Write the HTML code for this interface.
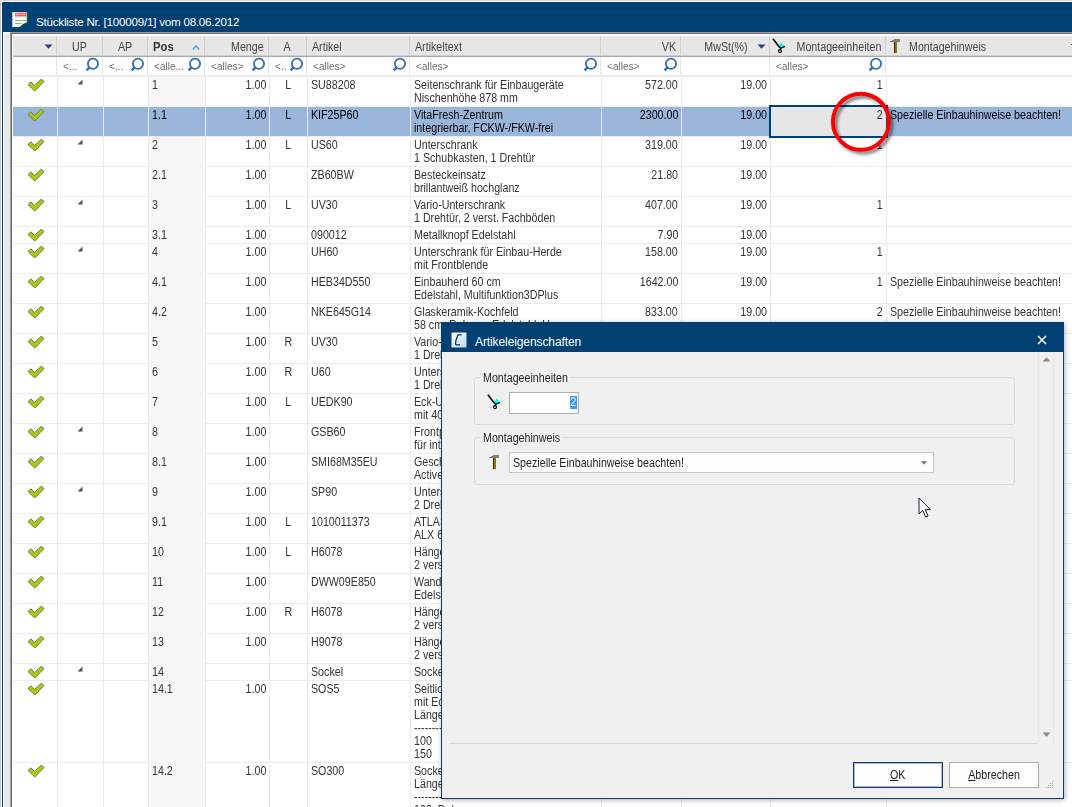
<!DOCTYPE html>
<html lang="de"><head><meta charset="utf-8"><title>Stückliste</title>
<style>
html,body{margin:0;padding:0}
body{width:1072px;height:807px;overflow:hidden;position:relative;background:#fff;font-family:"Liberation Sans",sans-serif;font-size:12px;line-height:13px;color:#333}
div,span{box-sizing:border-box}
.abs{position:absolute}
.t{display:inline-block;transform:scaleX(.89);white-space:pre}
.tl{transform-origin:0 0}
.tr{transform-origin:100% 0}
.tc{transform-origin:50% 0}
#title{left:3px;top:2px;width:1069px;height:30px;background:#004072}
#title .tt{position:absolute;left:33px;top:12.5px;color:#fff;font-size:11.6px;line-height:14px;letter-spacing:-0.22px;white-space:nowrap}
.row{position:absolute;left:13px;width:1059px;border-bottom:1px solid #ececec}
.c{position:absolute;top:0;bottom:-1px;border-left:1px solid #ebebeb;padding:2px 3px 0 3px;white-space:pre;overflow:hidden}
.r{text-align:right}
.ce{text-align:center;padding-left:0;padding-right:0}
.sel{background:#9ab5da;color:#000}
.sel .c{border-left-color:#e4eaf3;bottom:0}
.pos{background:#f7f7f7}
.sel .pos{background:transparent}
.ck{position:absolute;left:14px;top:1px}
.tri{position:absolute;left:19px;top:2px}
.hd{position:absolute;top:36px;height:20px;border-left:1px solid #d0d0d0;color:#444;padding:5px 4px 0 5px;white-space:nowrap;overflow:hidden}
.fl{position:absolute;top:57px;height:18px;border-left:1px solid #e6e6e6;color:#6e6e6e;font-size:11px;padding:2.5px 0 0 5.5px;white-space:nowrap;overflow:hidden}
.mag{position:absolute;right:2px;top:0}
</style></head><body>

<div class="abs" style="left:0;top:0;width:1px;height:807px;background:#c9c9c9"></div>
<div class="abs" style="left:0;top:0;width:1072px;height:1px;background:#d6d6d6"></div>
<div class="abs" style="left:2px;top:2px;width:1px;height:805px;background:#004072"></div>
<div class="abs" style="left:4px;top:33px;width:6px;height:774px;background:#e8e8e8"></div>
<div class="abs" style="left:10px;top:32px;width:1px;height:775px;background:#a0a0a0"></div>
<div class="abs" style="left:10px;top:32px;width:1062px;height:1px;background:#a0a0a0"></div>
<div class="abs" style="left:11px;top:33px;width:1px;height:774px;background:#696969"></div>
<div class="abs" style="left:11px;top:33px;width:1061px;height:1px;background:#696969"></div>
<div id="title" class="abs"><svg class="abs" style="left:8px;top:9px" width="18" height="18" viewBox="0 0 18 18"><path d="M1.2 1.2 H16.4 V10.5 C16.4 12.6 14 12.4 12 13.3 C10.6 15.6 8.6 16.8 6 16.8 H1.2 Z" fill="#fff"/><path d="M16.2 1 V10.5 C16.2 12.6 14 12.4 12 13.3 C10.6 15.6 8.6 16.6 6 16.6 H1" fill="none" stroke="#0a4d0a" stroke-width="0.9"/><path d="M1.4 1 V16.6" stroke="#9a9a9a" stroke-width="0.6"/><rect x="4" y="2.2" width="11.4" height="2.8" fill="#ff4a4a"/><path d="M5 3.6 H14.4" stroke="#fff" stroke-width="1" stroke-dasharray="1.6 0.8" opacity="0.8"/><path d="M4 5.7 H15.4" stroke="#7dbb7d" stroke-width="0.7"/><path d="M4 9.6 H15.4 M4 12.6 H10.6" stroke="#6db36d" stroke-width="1"/></svg><span class="tt">Stückliste Nr. [100009/1] vom 08.06.2012</span></div>
<div class="abs" style="left:13px;top:36px;width:1059px;height:19px;background:#e7e7e7"></div>
<div class="abs" style="left:13px;top:55px;width:1059px;height:1px;background:#cfcfcf"></div>
<div class="abs" style="left:13px;top:56px;width:1059px;height:1px;background:#a9a9a9"></div>
<div class="abs" style="left:13px;top:75px;width:1059px;height:2px;background:#ebebeb"></div>
<div class="hd" style="left:13px;width:43px;border-left:none;"><svg class="abs" style="left:31px;top:8px" width="9" height="5" viewBox="0 0 9 5"><path d="M0.5 0.5 H8.5 L4.5 4.8 Z" fill="#2b3f8c"/></svg></div>
<div class="hd" style="left:56px;width:46px;text-align:center;padding-left:0;padding-right:0;"><span class="t tc">UP</span></div>
<div class="hd" style="left:102px;width:45px;text-align:center;padding-left:0;padding-right:0;"><span class="t tc">AP</span></div>
<div class="hd" style="left:147px;width:57px;"><span class="t tl" style="transform:scaleX(.94)"><b style="color:#333">Pos</b></span><svg class="abs" style="left:44px;top:9px" width="8" height="5" viewBox="0 0 8 5"><path d="M0.8 4.4 L4 1 L7.2 4.4" fill="none" stroke="#5b9bd5" stroke-width="1.5"/></svg></div>
<div class="hd" style="left:204px;width:64px;text-align:right;"><span class="t tr">Menge</span></div>
<div class="hd" style="left:268px;width:38px;text-align:center;padding-left:0;padding-right:0;"><span class="t tc">A</span></div>
<div class="hd" style="left:306px;width:103px;"><span class="t tl">Artikel</span></div>
<div class="hd" style="left:409px;width:191px;"><span class="t tl">Artikeltext</span></div>
<div class="hd" style="left:600px;width:80px;text-align:right;"><span class="t tr">VK</span></div>
<div class="hd" style="left:680px;width:89px;text-align:right;padding-right:21px;"><span class="t tr">MwSt(%)</span><svg class="abs" style="left:76px;top:8px" width="9" height="5" viewBox="0 0 9 5"><path d="M0.5 0.5 H8.5 L4.5 4.8 Z" fill="#2b3f8c"/></svg></div>
<div class="hd" style="left:769px;width:116px;text-align:right;"><span class="t tr">Montageeinheiten</span><span class="abs" style="left:2px;top:2px"><svg width="16" height="16" viewBox="0 0 16 16"><path d="M1.3 1.3 L6.9 8.4" stroke="#000" stroke-width="1.6" stroke-linecap="round" fill="none"/><path d="M9.5 4.6 L12.5 7.9 L9.4 10 L6.8 7.9 Z" fill="#00ffff"/><path d="M6.3 8 L8.7 10.3 L13 8.3" stroke="#000" stroke-width="1.3" fill="none"/><path d="M8.9 10.4 L7.9 11.8" stroke="#000" stroke-width="1.3"/><circle cx="8" cy="13.1" r="1.5" fill="none" stroke="#000" stroke-width="1.1"/></svg></span></div>
<div class="hd" style="left:885px;width:195px;padding-left:23px;"><span class="t tl">Montagehinweis</span><span class="abs" style="left:3px;top:2px"><svg width="14" height="16" viewBox="0 0 14 16"><path d="M1 4 V3 H3 V2 H5 V1 H11 V4 Z" fill="#808080"/><rect x="5" y="4" width="1" height="11" fill="#800000"/><rect x="6" y="4" width="2" height="11" fill="#808000"/></svg></span></div>
<div class="abs" style="left:1071px;top:44px;width:1px;height:1px;background:#3a4fb0"></div>
<div class="fl" style="left:13px;width:43px;border-left:none;"></div>
<div class="fl" style="left:56px;width:46px;"><span class="t tl" style="transform:scaleX(.915)">&lt;...</span><svg class="mag" width="16" height="16" viewBox="0 0 16 16"><circle cx="9" cy="6.8" r="5.1" fill="none" stroke="#3470b0" stroke-width="1.8"/><path d="M5.6 10.4 L2.6 13.4" stroke="#3470b0" stroke-width="2.5" stroke-linecap="butt"/></svg></div>
<div class="fl" style="left:102px;width:45px;"><span class="t tl" style="transform:scaleX(.915)">&lt;...</span><svg class="mag" width="16" height="16" viewBox="0 0 16 16"><circle cx="9" cy="6.8" r="5.1" fill="none" stroke="#3470b0" stroke-width="1.8"/><path d="M5.6 10.4 L2.6 13.4" stroke="#3470b0" stroke-width="2.5" stroke-linecap="butt"/></svg></div>
<div class="fl" style="left:147px;width:57px;"><span class="t tl" style="transform:scaleX(.915)">&lt;alle...</span><svg class="mag" width="16" height="16" viewBox="0 0 16 16"><circle cx="9" cy="6.8" r="5.1" fill="none" stroke="#3470b0" stroke-width="1.8"/><path d="M5.6 10.4 L2.6 13.4" stroke="#3470b0" stroke-width="2.5" stroke-linecap="butt"/></svg></div>
<div class="fl" style="left:204px;width:64px;"><span class="t tl" style="transform:scaleX(.915)">&lt;alles&gt;</span><svg class="mag" width="16" height="16" viewBox="0 0 16 16"><circle cx="9" cy="6.8" r="5.1" fill="none" stroke="#3470b0" stroke-width="1.8"/><path d="M5.6 10.4 L2.6 13.4" stroke="#3470b0" stroke-width="2.5" stroke-linecap="butt"/></svg></div>
<div class="fl" style="left:268px;width:38px;"><span class="t tl" style="transform:scaleX(.915)">&lt;..</span><svg class="mag" width="16" height="16" viewBox="0 0 16 16"><circle cx="9" cy="6.8" r="5.1" fill="none" stroke="#3470b0" stroke-width="1.8"/><path d="M5.6 10.4 L2.6 13.4" stroke="#3470b0" stroke-width="2.5" stroke-linecap="butt"/></svg></div>
<div class="fl" style="left:306px;width:103px;"><span class="t tl" style="transform:scaleX(.915)">&lt;alles&gt;</span><svg class="mag" width="16" height="16" viewBox="0 0 16 16"><circle cx="9" cy="6.8" r="5.1" fill="none" stroke="#3470b0" stroke-width="1.8"/><path d="M5.6 10.4 L2.6 13.4" stroke="#3470b0" stroke-width="2.5" stroke-linecap="butt"/></svg></div>
<div class="fl" style="left:409px;width:191px;"><span class="t tl" style="transform:scaleX(.915)">&lt;alles&gt;</span><svg class="mag" width="16" height="16" viewBox="0 0 16 16"><circle cx="9" cy="6.8" r="5.1" fill="none" stroke="#3470b0" stroke-width="1.8"/><path d="M5.6 10.4 L2.6 13.4" stroke="#3470b0" stroke-width="2.5" stroke-linecap="butt"/></svg></div>
<div class="fl" style="left:600px;width:80px;"><span class="t tl" style="transform:scaleX(.915)">&lt;alles&gt;</span><svg class="mag" width="16" height="16" viewBox="0 0 16 16"><circle cx="9" cy="6.8" r="5.1" fill="none" stroke="#3470b0" stroke-width="1.8"/><path d="M5.6 10.4 L2.6 13.4" stroke="#3470b0" stroke-width="2.5" stroke-linecap="butt"/></svg></div>
<div class="fl" style="left:680px;width:89px;"></div>
<div class="fl" style="left:769px;width:116px;"><span class="t tl" style="transform:scaleX(.915)">&lt;alles&gt;</span><svg class="mag" width="16" height="16" viewBox="0 0 16 16"><circle cx="9" cy="6.8" r="5.1" fill="none" stroke="#3470b0" stroke-width="1.8"/><path d="M5.6 10.4 L2.6 13.4" stroke="#3470b0" stroke-width="2.5" stroke-linecap="butt"/></svg></div>
<div class="fl" style="left:885px;width:195px;"></div>
<div class="row" style="top:77px;height:30px">
<div class="c" style="left:0px;width:44px;border-left:none;"><svg class="ck" width="18" height="14" viewBox="0 0 18 14"><path d="M1 6.6 L4 3.8 L7.4 7.7 L14.2 1.2 L17 3.6 L7.8 13 Z" fill="#b4c70c" stroke="#3f7f46" stroke-width="0.9" stroke-linejoin="round"/></svg></div>
<div class="c" style="left:44px;width:46px;"><svg class="tri" width="6" height="6" viewBox="0 0 6 6"><path d="M5.5 0.5 L5.5 5.5 L0.5 5.5 Z" fill="#555"/></svg></div>
<div class="c" style="left:90px;width:45px;"></div>
<div class="c pos" style="left:135px;width:57px;"><span class="t tl">1</span></div>
<div class="c r" style="left:192px;width:64px;"><span class="t tr">1.00</span></div>
<div class="c ce" style="left:256px;width:38px;"><span class="t tc">L</span></div>
<div class="c" style="left:294px;width:103px;"><span class="t tl">SU88208</span></div>
<div class="c" style="left:397px;width:191px;"><span class="t tl">Seitenschrank für Einbaugeräte
Nischenhöhe 878 mm</span></div>
<div class="c r" style="left:588px;width:80px;"><span class="t tr">572.00</span></div>
<div class="c r" style="left:668px;width:89px;"><span class="t tr">19.00</span></div>
<div class="c r" style="left:757px;width:116px;"><span class="t tr">1</span></div>
<div class="c" style="left:873px;width:194px;"></div>
</div>
<div class="row sel" style="top:107px;height:30px">
<div class="c" style="left:0px;width:44px;border-left:none;"><svg class="ck" width="18" height="14" viewBox="0 0 18 14"><path d="M1 6.6 L4 3.8 L7.4 7.7 L14.2 1.2 L17 3.6 L7.8 13 Z" fill="#b4c70c" stroke="#3f7f46" stroke-width="0.9" stroke-linejoin="round"/></svg></div>
<div class="c" style="left:44px;width:46px;"></div>
<div class="c" style="left:90px;width:45px;"></div>
<div class="c pos" style="left:135px;width:57px;"><span class="t tl">1.1</span></div>
<div class="c r" style="left:192px;width:64px;"><span class="t tr">1.00</span></div>
<div class="c ce" style="left:256px;width:38px;"><span class="t tc">L</span></div>
<div class="c" style="left:294px;width:103px;"><span class="t tl">KIF25P60</span></div>
<div class="c" style="left:397px;width:191px;"><span class="t tl">VitaFresh-Zentrum
integrierbar, FCKW-/FKW-frei</span></div>
<div class="c r" style="left:588px;width:80px;"><span class="t tr">2300.00</span></div>
<div class="c r" style="left:668px;width:89px;"><span class="t tr">19.00</span></div>
<div class="c r" style="left:757px;width:116px;"><span class="t tr">2</span></div>
<div class="c" style="left:873px;width:194px;"><span class="t tl">Spezielle Einbauhinweise beachten!</span></div>
</div>
<div class="row" style="top:137px;height:30px">
<div class="c" style="left:0px;width:44px;border-left:none;"><svg class="ck" width="18" height="14" viewBox="0 0 18 14"><path d="M1 6.6 L4 3.8 L7.4 7.7 L14.2 1.2 L17 3.6 L7.8 13 Z" fill="#b4c70c" stroke="#3f7f46" stroke-width="0.9" stroke-linejoin="round"/></svg></div>
<div class="c" style="left:44px;width:46px;"><svg class="tri" width="6" height="6" viewBox="0 0 6 6"><path d="M5.5 0.5 L5.5 5.5 L0.5 5.5 Z" fill="#555"/></svg></div>
<div class="c" style="left:90px;width:45px;"></div>
<div class="c pos" style="left:135px;width:57px;"><span class="t tl">2</span></div>
<div class="c r" style="left:192px;width:64px;"><span class="t tr">1.00</span></div>
<div class="c ce" style="left:256px;width:38px;"><span class="t tc">L</span></div>
<div class="c" style="left:294px;width:103px;"><span class="t tl">US60</span></div>
<div class="c" style="left:397px;width:191px;"><span class="t tl">Unterschrank
1 Schubkasten, 1 Drehtür</span></div>
<div class="c r" style="left:588px;width:80px;"><span class="t tr">319.00</span></div>
<div class="c r" style="left:668px;width:89px;"><span class="t tr">19.00</span></div>
<div class="c r" style="left:757px;width:116px;"><span class="t tr">1</span></div>
<div class="c" style="left:873px;width:194px;"></div>
</div>
<div class="row" style="top:167px;height:30px">
<div class="c" style="left:0px;width:44px;border-left:none;"><svg class="ck" width="18" height="14" viewBox="0 0 18 14"><path d="M1 6.6 L4 3.8 L7.4 7.7 L14.2 1.2 L17 3.6 L7.8 13 Z" fill="#b4c70c" stroke="#3f7f46" stroke-width="0.9" stroke-linejoin="round"/></svg></div>
<div class="c" style="left:44px;width:46px;"></div>
<div class="c" style="left:90px;width:45px;"></div>
<div class="c pos" style="left:135px;width:57px;"><span class="t tl">2.1</span></div>
<div class="c r" style="left:192px;width:64px;"><span class="t tr">1.00</span></div>
<div class="c ce" style="left:256px;width:38px;"></div>
<div class="c" style="left:294px;width:103px;"><span class="t tl">ZB60BW</span></div>
<div class="c" style="left:397px;width:191px;"><span class="t tl">Besteckeinsatz
brillantweiß hochglanz</span></div>
<div class="c r" style="left:588px;width:80px;"><span class="t tr">21.80</span></div>
<div class="c r" style="left:668px;width:89px;"><span class="t tr">19.00</span></div>
<div class="c r" style="left:757px;width:116px;"></div>
<div class="c" style="left:873px;width:194px;"></div>
</div>
<div class="row" style="top:197px;height:30px">
<div class="c" style="left:0px;width:44px;border-left:none;"><svg class="ck" width="18" height="14" viewBox="0 0 18 14"><path d="M1 6.6 L4 3.8 L7.4 7.7 L14.2 1.2 L17 3.6 L7.8 13 Z" fill="#b4c70c" stroke="#3f7f46" stroke-width="0.9" stroke-linejoin="round"/></svg></div>
<div class="c" style="left:44px;width:46px;"><svg class="tri" width="6" height="6" viewBox="0 0 6 6"><path d="M5.5 0.5 L5.5 5.5 L0.5 5.5 Z" fill="#555"/></svg></div>
<div class="c" style="left:90px;width:45px;"></div>
<div class="c pos" style="left:135px;width:57px;"><span class="t tl">3</span></div>
<div class="c r" style="left:192px;width:64px;"><span class="t tr">1.00</span></div>
<div class="c ce" style="left:256px;width:38px;"><span class="t tc">L</span></div>
<div class="c" style="left:294px;width:103px;"><span class="t tl">UV30</span></div>
<div class="c" style="left:397px;width:191px;"><span class="t tl">Vario-Unterschrank
1 Drehtür, 2 verst. Fachböden</span></div>
<div class="c r" style="left:588px;width:80px;"><span class="t tr">407.00</span></div>
<div class="c r" style="left:668px;width:89px;"><span class="t tr">19.00</span></div>
<div class="c r" style="left:757px;width:116px;"><span class="t tr">1</span></div>
<div class="c" style="left:873px;width:194px;"></div>
</div>
<div class="row" style="top:227px;height:17px">
<div class="c" style="left:0px;width:44px;border-left:none;"><svg class="ck" width="18" height="14" viewBox="0 0 18 14"><path d="M1 6.6 L4 3.8 L7.4 7.7 L14.2 1.2 L17 3.6 L7.8 13 Z" fill="#b4c70c" stroke="#3f7f46" stroke-width="0.9" stroke-linejoin="round"/></svg></div>
<div class="c" style="left:44px;width:46px;"></div>
<div class="c" style="left:90px;width:45px;"></div>
<div class="c pos" style="left:135px;width:57px;"><span class="t tl">3.1</span></div>
<div class="c r" style="left:192px;width:64px;"><span class="t tr">1.00</span></div>
<div class="c ce" style="left:256px;width:38px;"></div>
<div class="c" style="left:294px;width:103px;"><span class="t tl">090012</span></div>
<div class="c" style="left:397px;width:191px;"><span class="t tl">Metallknopf Edelstahl</span></div>
<div class="c r" style="left:588px;width:80px;"><span class="t tr">7.90</span></div>
<div class="c r" style="left:668px;width:89px;"><span class="t tr">19.00</span></div>
<div class="c r" style="left:757px;width:116px;"></div>
<div class="c" style="left:873px;width:194px;"></div>
</div>
<div class="row" style="top:244px;height:30px">
<div class="c" style="left:0px;width:44px;border-left:none;"><svg class="ck" width="18" height="14" viewBox="0 0 18 14"><path d="M1 6.6 L4 3.8 L7.4 7.7 L14.2 1.2 L17 3.6 L7.8 13 Z" fill="#b4c70c" stroke="#3f7f46" stroke-width="0.9" stroke-linejoin="round"/></svg></div>
<div class="c" style="left:44px;width:46px;"><svg class="tri" width="6" height="6" viewBox="0 0 6 6"><path d="M5.5 0.5 L5.5 5.5 L0.5 5.5 Z" fill="#555"/></svg></div>
<div class="c" style="left:90px;width:45px;"></div>
<div class="c pos" style="left:135px;width:57px;"><span class="t tl">4</span></div>
<div class="c r" style="left:192px;width:64px;"><span class="t tr">1.00</span></div>
<div class="c ce" style="left:256px;width:38px;"></div>
<div class="c" style="left:294px;width:103px;"><span class="t tl">UH60</span></div>
<div class="c" style="left:397px;width:191px;"><span class="t tl">Unterschrank für Einbau-Herde
mit Frontblende</span></div>
<div class="c r" style="left:588px;width:80px;"><span class="t tr">158.00</span></div>
<div class="c r" style="left:668px;width:89px;"><span class="t tr">19.00</span></div>
<div class="c r" style="left:757px;width:116px;"><span class="t tr">1</span></div>
<div class="c" style="left:873px;width:194px;"></div>
</div>
<div class="row" style="top:274px;height:30px">
<div class="c" style="left:0px;width:44px;border-left:none;"><svg class="ck" width="18" height="14" viewBox="0 0 18 14"><path d="M1 6.6 L4 3.8 L7.4 7.7 L14.2 1.2 L17 3.6 L7.8 13 Z" fill="#b4c70c" stroke="#3f7f46" stroke-width="0.9" stroke-linejoin="round"/></svg></div>
<div class="c" style="left:44px;width:46px;"></div>
<div class="c" style="left:90px;width:45px;"></div>
<div class="c pos" style="left:135px;width:57px;"><span class="t tl">4.1</span></div>
<div class="c r" style="left:192px;width:64px;"><span class="t tr">1.00</span></div>
<div class="c ce" style="left:256px;width:38px;"></div>
<div class="c" style="left:294px;width:103px;"><span class="t tl">HEB34D550</span></div>
<div class="c" style="left:397px;width:191px;"><span class="t tl">Einbauherd 60 cm
Edelstahl, Multifunktion3DPlus</span></div>
<div class="c r" style="left:588px;width:80px;"><span class="t tr">1642.00</span></div>
<div class="c r" style="left:668px;width:89px;"><span class="t tr">19.00</span></div>
<div class="c r" style="left:757px;width:116px;"><span class="t tr">1</span></div>
<div class="c" style="left:873px;width:194px;"><span class="t tl">Spezielle Einbauhinweise beachten!</span></div>
</div>
<div class="row" style="top:304px;height:30px">
<div class="c" style="left:0px;width:44px;border-left:none;"><svg class="ck" width="18" height="14" viewBox="0 0 18 14"><path d="M1 6.6 L4 3.8 L7.4 7.7 L14.2 1.2 L17 3.6 L7.8 13 Z" fill="#b4c70c" stroke="#3f7f46" stroke-width="0.9" stroke-linejoin="round"/></svg></div>
<div class="c" style="left:44px;width:46px;"></div>
<div class="c" style="left:90px;width:45px;"></div>
<div class="c pos" style="left:135px;width:57px;"><span class="t tl">4.2</span></div>
<div class="c r" style="left:192px;width:64px;"><span class="t tr">1.00</span></div>
<div class="c ce" style="left:256px;width:38px;"></div>
<div class="c" style="left:294px;width:103px;"><span class="t tl">NKE645G14</span></div>
<div class="c" style="left:397px;width:191px;"><span class="t tl">Glaskeramik-Kochfeld
58 cm, Rahmen Edelstahl, U</span></div>
<div class="c r" style="left:588px;width:80px;"><span class="t tr">833.00</span></div>
<div class="c r" style="left:668px;width:89px;"><span class="t tr">19.00</span></div>
<div class="c r" style="left:757px;width:116px;"><span class="t tr">2</span></div>
<div class="c" style="left:873px;width:194px;"><span class="t tl">Spezielle Einbauhinweise beachten!</span></div>
</div>
<div class="row" style="top:334px;height:30px">
<div class="c" style="left:0px;width:44px;border-left:none;"><svg class="ck" width="18" height="14" viewBox="0 0 18 14"><path d="M1 6.6 L4 3.8 L7.4 7.7 L14.2 1.2 L17 3.6 L7.8 13 Z" fill="#b4c70c" stroke="#3f7f46" stroke-width="0.9" stroke-linejoin="round"/></svg></div>
<div class="c" style="left:44px;width:46px;"></div>
<div class="c" style="left:90px;width:45px;"></div>
<div class="c pos" style="left:135px;width:57px;"><span class="t tl">5</span></div>
<div class="c r" style="left:192px;width:64px;"><span class="t tr">1.00</span></div>
<div class="c ce" style="left:256px;width:38px;"><span class="t tc">R</span></div>
<div class="c" style="left:294px;width:103px;"><span class="t tl">UV30</span></div>
<div class="c" style="left:397px;width:191px;"><span class="t tl">Vario-Unterschrank
1 Drehtür, 2 verst. Fachböden</span></div>
<div class="c r" style="left:588px;width:80px;"><span class="t tr">407.00</span></div>
<div class="c r" style="left:668px;width:89px;"><span class="t tr">19.00</span></div>
<div class="c r" style="left:757px;width:116px;"><span class="t tr">1</span></div>
<div class="c" style="left:873px;width:194px;"></div>
</div>
<div class="row" style="top:364px;height:30px">
<div class="c" style="left:0px;width:44px;border-left:none;"><svg class="ck" width="18" height="14" viewBox="0 0 18 14"><path d="M1 6.6 L4 3.8 L7.4 7.7 L14.2 1.2 L17 3.6 L7.8 13 Z" fill="#b4c70c" stroke="#3f7f46" stroke-width="0.9" stroke-linejoin="round"/></svg></div>
<div class="c" style="left:44px;width:46px;"></div>
<div class="c" style="left:90px;width:45px;"></div>
<div class="c pos" style="left:135px;width:57px;"><span class="t tl">6</span></div>
<div class="c r" style="left:192px;width:64px;"><span class="t tr">1.00</span></div>
<div class="c ce" style="left:256px;width:38px;"><span class="t tc">R</span></div>
<div class="c" style="left:294px;width:103px;"><span class="t tl">U60</span></div>
<div class="c" style="left:397px;width:191px;"><span class="t tl">Unterschrank
1 Drehtür, 2 verst. Fachböden</span></div>
<div class="c r" style="left:588px;width:80px;"><span class="t tr">372.00</span></div>
<div class="c r" style="left:668px;width:89px;"><span class="t tr">19.00</span></div>
<div class="c r" style="left:757px;width:116px;"><span class="t tr">1</span></div>
<div class="c" style="left:873px;width:194px;"></div>
</div>
<div class="row" style="top:394px;height:30px">
<div class="c" style="left:0px;width:44px;border-left:none;"><svg class="ck" width="18" height="14" viewBox="0 0 18 14"><path d="M1 6.6 L4 3.8 L7.4 7.7 L14.2 1.2 L17 3.6 L7.8 13 Z" fill="#b4c70c" stroke="#3f7f46" stroke-width="0.9" stroke-linejoin="round"/></svg></div>
<div class="c" style="left:44px;width:46px;"></div>
<div class="c" style="left:90px;width:45px;"></div>
<div class="c pos" style="left:135px;width:57px;"><span class="t tl">7</span></div>
<div class="c r" style="left:192px;width:64px;"><span class="t tr">1.00</span></div>
<div class="c ce" style="left:256px;width:38px;"><span class="t tc">L</span></div>
<div class="c" style="left:294px;width:103px;"><span class="t tl">UEDK90</span></div>
<div class="c" style="left:397px;width:191px;"><span class="t tl">Eck-Unterschrank
mit 40 cm Drehtür</span></div>
<div class="c r" style="left:588px;width:80px;"><span class="t tr">694.00</span></div>
<div class="c r" style="left:668px;width:89px;"><span class="t tr">19.00</span></div>
<div class="c r" style="left:757px;width:116px;"><span class="t tr">1</span></div>
<div class="c" style="left:873px;width:194px;"></div>
</div>
<div class="row" style="top:424px;height:30px">
<div class="c" style="left:0px;width:44px;border-left:none;"><svg class="ck" width="18" height="14" viewBox="0 0 18 14"><path d="M1 6.6 L4 3.8 L7.4 7.7 L14.2 1.2 L17 3.6 L7.8 13 Z" fill="#b4c70c" stroke="#3f7f46" stroke-width="0.9" stroke-linejoin="round"/></svg></div>
<div class="c" style="left:44px;width:46px;"><svg class="tri" width="6" height="6" viewBox="0 0 6 6"><path d="M5.5 0.5 L5.5 5.5 L0.5 5.5 Z" fill="#555"/></svg></div>
<div class="c" style="left:90px;width:45px;"></div>
<div class="c pos" style="left:135px;width:57px;"><span class="t tl">8</span></div>
<div class="c r" style="left:192px;width:64px;"><span class="t tr">1.00</span></div>
<div class="c ce" style="left:256px;width:38px;"></div>
<div class="c" style="left:294px;width:103px;"><span class="t tl">GSB60</span></div>
<div class="c" style="left:397px;width:191px;"><span class="t tl">Frontplatte
für integrierte Geschirrspüler</span></div>
<div class="c r" style="left:588px;width:80px;"><span class="t tr">174.00</span></div>
<div class="c r" style="left:668px;width:89px;"><span class="t tr">19.00</span></div>
<div class="c r" style="left:757px;width:116px;"><span class="t tr">1</span></div>
<div class="c" style="left:873px;width:194px;"></div>
</div>
<div class="row" style="top:454px;height:30px">
<div class="c" style="left:0px;width:44px;border-left:none;"><svg class="ck" width="18" height="14" viewBox="0 0 18 14"><path d="M1 6.6 L4 3.8 L7.4 7.7 L14.2 1.2 L17 3.6 L7.8 13 Z" fill="#b4c70c" stroke="#3f7f46" stroke-width="0.9" stroke-linejoin="round"/></svg></div>
<div class="c" style="left:44px;width:46px;"></div>
<div class="c" style="left:90px;width:45px;"></div>
<div class="c pos" style="left:135px;width:57px;"><span class="t tl">8.1</span></div>
<div class="c r" style="left:192px;width:64px;"><span class="t tr">1.00</span></div>
<div class="c ce" style="left:256px;width:38px;"></div>
<div class="c" style="left:294px;width:103px;"><span class="t tl">SMI68M35EU</span></div>
<div class="c" style="left:397px;width:191px;"><span class="t tl">Geschirrspüler
ActiveWater integrierbar</span></div>
<div class="c r" style="left:588px;width:80px;"><span class="t tr">999.00</span></div>
<div class="c r" style="left:668px;width:89px;"><span class="t tr">19.00</span></div>
<div class="c r" style="left:757px;width:116px;"><span class="t tr">1</span></div>
<div class="c" style="left:873px;width:194px;"></div>
</div>
<div class="row" style="top:484px;height:30px">
<div class="c" style="left:0px;width:44px;border-left:none;"><svg class="ck" width="18" height="14" viewBox="0 0 18 14"><path d="M1 6.6 L4 3.8 L7.4 7.7 L14.2 1.2 L17 3.6 L7.8 13 Z" fill="#b4c70c" stroke="#3f7f46" stroke-width="0.9" stroke-linejoin="round"/></svg></div>
<div class="c" style="left:44px;width:46px;"><svg class="tri" width="6" height="6" viewBox="0 0 6 6"><path d="M5.5 0.5 L5.5 5.5 L0.5 5.5 Z" fill="#555"/></svg></div>
<div class="c" style="left:90px;width:45px;"></div>
<div class="c pos" style="left:135px;width:57px;"><span class="t tl">9</span></div>
<div class="c r" style="left:192px;width:64px;"><span class="t tr">1.00</span></div>
<div class="c ce" style="left:256px;width:38px;"></div>
<div class="c" style="left:294px;width:103px;"><span class="t tl">SP90</span></div>
<div class="c" style="left:397px;width:191px;"><span class="t tl">Unterschrank für Spüle
2 Drehtüren</span></div>
<div class="c r" style="left:588px;width:80px;"><span class="t tr">446.00</span></div>
<div class="c r" style="left:668px;width:89px;"><span class="t tr">19.00</span></div>
<div class="c r" style="left:757px;width:116px;"><span class="t tr">1</span></div>
<div class="c" style="left:873px;width:194px;"></div>
</div>
<div class="row" style="top:514px;height:30px">
<div class="c" style="left:0px;width:44px;border-left:none;"><svg class="ck" width="18" height="14" viewBox="0 0 18 14"><path d="M1 6.6 L4 3.8 L7.4 7.7 L14.2 1.2 L17 3.6 L7.8 13 Z" fill="#b4c70c" stroke="#3f7f46" stroke-width="0.9" stroke-linejoin="round"/></svg></div>
<div class="c" style="left:44px;width:46px;"></div>
<div class="c" style="left:90px;width:45px;"></div>
<div class="c pos" style="left:135px;width:57px;"><span class="t tl">9.1</span></div>
<div class="c r" style="left:192px;width:64px;"><span class="t tr">1.00</span></div>
<div class="c ce" style="left:256px;width:38px;"><span class="t tc">L</span></div>
<div class="c" style="left:294px;width:103px;"><span class="t tl">1010011373</span></div>
<div class="c" style="left:397px;width:191px;"><span class="t tl">ATLAS Einbauspüle
ALX 610 Edelstahl</span></div>
<div class="c r" style="left:588px;width:80px;"><span class="t tr">385.00</span></div>
<div class="c r" style="left:668px;width:89px;"><span class="t tr">19.00</span></div>
<div class="c r" style="left:757px;width:116px;"><span class="t tr">1</span></div>
<div class="c" style="left:873px;width:194px;"></div>
</div>
<div class="row" style="top:544px;height:30px">
<div class="c" style="left:0px;width:44px;border-left:none;"><svg class="ck" width="18" height="14" viewBox="0 0 18 14"><path d="M1 6.6 L4 3.8 L7.4 7.7 L14.2 1.2 L17 3.6 L7.8 13 Z" fill="#b4c70c" stroke="#3f7f46" stroke-width="0.9" stroke-linejoin="round"/></svg></div>
<div class="c" style="left:44px;width:46px;"></div>
<div class="c" style="left:90px;width:45px;"></div>
<div class="c pos" style="left:135px;width:57px;"><span class="t tl">10</span></div>
<div class="c r" style="left:192px;width:64px;"><span class="t tr">1.00</span></div>
<div class="c ce" style="left:256px;width:38px;"><span class="t tc">L</span></div>
<div class="c" style="left:294px;width:103px;"><span class="t tl">H6078</span></div>
<div class="c" style="left:397px;width:191px;"><span class="t tl">Hängeschrank
2 verst. Fachböden</span></div>
<div class="c r" style="left:588px;width:80px;"><span class="t tr">279.00</span></div>
<div class="c r" style="left:668px;width:89px;"><span class="t tr">19.00</span></div>
<div class="c r" style="left:757px;width:116px;"><span class="t tr">1</span></div>
<div class="c" style="left:873px;width:194px;"></div>
</div>
<div class="row" style="top:574px;height:30px">
<div class="c" style="left:0px;width:44px;border-left:none;"><svg class="ck" width="18" height="14" viewBox="0 0 18 14"><path d="M1 6.6 L4 3.8 L7.4 7.7 L14.2 1.2 L17 3.6 L7.8 13 Z" fill="#b4c70c" stroke="#3f7f46" stroke-width="0.9" stroke-linejoin="round"/></svg></div>
<div class="c" style="left:44px;width:46px;"></div>
<div class="c" style="left:90px;width:45px;"></div>
<div class="c pos" style="left:135px;width:57px;"><span class="t tl">11</span></div>
<div class="c r" style="left:192px;width:64px;"><span class="t tr">1.00</span></div>
<div class="c ce" style="left:256px;width:38px;"></div>
<div class="c" style="left:294px;width:103px;"><span class="t tl">DWW09E850</span></div>
<div class="c" style="left:397px;width:191px;"><span class="t tl">Wandesse 90 cm
Edelstahl</span></div>
<div class="c r" style="left:588px;width:80px;"><span class="t tr">799.00</span></div>
<div class="c r" style="left:668px;width:89px;"><span class="t tr">19.00</span></div>
<div class="c r" style="left:757px;width:116px;"><span class="t tr">1</span></div>
<div class="c" style="left:873px;width:194px;"></div>
</div>
<div class="row" style="top:604px;height:30px">
<div class="c" style="left:0px;width:44px;border-left:none;"><svg class="ck" width="18" height="14" viewBox="0 0 18 14"><path d="M1 6.6 L4 3.8 L7.4 7.7 L14.2 1.2 L17 3.6 L7.8 13 Z" fill="#b4c70c" stroke="#3f7f46" stroke-width="0.9" stroke-linejoin="round"/></svg></div>
<div class="c" style="left:44px;width:46px;"></div>
<div class="c" style="left:90px;width:45px;"></div>
<div class="c pos" style="left:135px;width:57px;"><span class="t tl">12</span></div>
<div class="c r" style="left:192px;width:64px;"><span class="t tr">1.00</span></div>
<div class="c ce" style="left:256px;width:38px;"><span class="t tc">R</span></div>
<div class="c" style="left:294px;width:103px;"><span class="t tl">H6078</span></div>
<div class="c" style="left:397px;width:191px;"><span class="t tl">Hängeschrank
2 verst. Fachböden</span></div>
<div class="c r" style="left:588px;width:80px;"><span class="t tr">279.00</span></div>
<div class="c r" style="left:668px;width:89px;"><span class="t tr">19.00</span></div>
<div class="c r" style="left:757px;width:116px;"><span class="t tr">1</span></div>
<div class="c" style="left:873px;width:194px;"></div>
</div>
<div class="row" style="top:634px;height:30px">
<div class="c" style="left:0px;width:44px;border-left:none;"><svg class="ck" width="18" height="14" viewBox="0 0 18 14"><path d="M1 6.6 L4 3.8 L7.4 7.7 L14.2 1.2 L17 3.6 L7.8 13 Z" fill="#b4c70c" stroke="#3f7f46" stroke-width="0.9" stroke-linejoin="round"/></svg></div>
<div class="c" style="left:44px;width:46px;"></div>
<div class="c" style="left:90px;width:45px;"></div>
<div class="c pos" style="left:135px;width:57px;"><span class="t tl">13</span></div>
<div class="c r" style="left:192px;width:64px;"><span class="t tr">1.00</span></div>
<div class="c ce" style="left:256px;width:38px;"></div>
<div class="c" style="left:294px;width:103px;"><span class="t tl">H9078</span></div>
<div class="c" style="left:397px;width:191px;"><span class="t tl">Hängeschrank
2 verst. Fachböden</span></div>
<div class="c r" style="left:588px;width:80px;"><span class="t tr">352.00</span></div>
<div class="c r" style="left:668px;width:89px;"><span class="t tr">19.00</span></div>
<div class="c r" style="left:757px;width:116px;"><span class="t tr">1</span></div>
<div class="c" style="left:873px;width:194px;"></div>
</div>
<div class="row" style="top:664px;height:17px">
<div class="c" style="left:0px;width:44px;border-left:none;"><svg class="ck" width="18" height="14" viewBox="0 0 18 14"><path d="M1 6.6 L4 3.8 L7.4 7.7 L14.2 1.2 L17 3.6 L7.8 13 Z" fill="#b4c70c" stroke="#3f7f46" stroke-width="0.9" stroke-linejoin="round"/></svg></div>
<div class="c" style="left:44px;width:46px;"><svg class="tri" width="6" height="6" viewBox="0 0 6 6"><path d="M5.5 0.5 L5.5 5.5 L0.5 5.5 Z" fill="#555"/></svg></div>
<div class="c" style="left:90px;width:45px;"></div>
<div class="c pos" style="left:135px;width:57px;"><span class="t tl">14</span></div>
<div class="c r" style="left:192px;width:64px;"></div>
<div class="c ce" style="left:256px;width:38px;"></div>
<div class="c" style="left:294px;width:103px;"><span class="t tl">Sockel</span></div>
<div class="c" style="left:397px;width:191px;"><span class="t tl">Sockel</span></div>
<div class="c r" style="left:588px;width:80px;"></div>
<div class="c r" style="left:668px;width:89px;"></div>
<div class="c r" style="left:757px;width:116px;"></div>
<div class="c" style="left:873px;width:194px;"></div>
</div>
<div class="row" style="top:681px;height:82px">
<div class="c" style="left:0px;width:44px;border-left:none;"><svg class="ck" width="18" height="14" viewBox="0 0 18 14"><path d="M1 6.6 L4 3.8 L7.4 7.7 L14.2 1.2 L17 3.6 L7.8 13 Z" fill="#b4c70c" stroke="#3f7f46" stroke-width="0.9" stroke-linejoin="round"/></svg></div>
<div class="c" style="left:44px;width:46px;"></div>
<div class="c" style="left:90px;width:45px;"></div>
<div class="c pos" style="left:135px;width:57px;"><span class="t tl">14.1</span></div>
<div class="c r" style="left:192px;width:64px;"><span class="t tr">1.00</span></div>
<div class="c ce" style="left:256px;width:38px;"></div>
<div class="c" style="left:294px;width:103px;"><span class="t tl">SOS5</span></div>
<div class="c" style="left:397px;width:191px;"><span class="t tl">Seitlicher Sockel
mit Eckverbinder
Länge in mm
------------------------------
100
150</span></div>
<div class="c r" style="left:588px;width:80px;"><span class="t tr">38.00</span></div>
<div class="c r" style="left:668px;width:89px;"><span class="t tr">19.00</span></div>
<div class="c r" style="left:757px;width:116px;"></div>
<div class="c" style="left:873px;width:194px;"></div>
</div>
<div class="row" style="top:763px;height:60px">
<div class="c" style="left:0px;width:44px;border-left:none;"><svg class="ck" width="18" height="14" viewBox="0 0 18 14"><path d="M1 6.6 L4 3.8 L7.4 7.7 L14.2 1.2 L17 3.6 L7.8 13 Z" fill="#b4c70c" stroke="#3f7f46" stroke-width="0.9" stroke-linejoin="round"/></svg></div>
<div class="c" style="left:44px;width:46px;"></div>
<div class="c" style="left:90px;width:45px;"></div>
<div class="c pos" style="left:135px;width:57px;"><span class="t tl">14.2</span></div>
<div class="c r" style="left:192px;width:64px;"><span class="t tr">1.00</span></div>
<div class="c ce" style="left:256px;width:38px;"></div>
<div class="c" style="left:294px;width:103px;"><span class="t tl">SO300</span></div>
<div class="c" style="left:397px;width:191px;"><span class="t tl">Sockelblende
Länge in mm
------------------------------
100  Dek.</span></div>
<div class="c r" style="left:588px;width:80px;"><span class="t tr">112.00</span></div>
<div class="c r" style="left:668px;width:89px;"><span class="t tr">19.00</span></div>
<div class="c r" style="left:757px;width:116px;"></div>
<div class="c" style="left:873px;width:194px;"></div>
</div>
<div class="abs" style="left:769px;top:105px;width:119px;height:33px;border:2px solid #02417a;background:#e6e6e6;text-align:right;padding:2px 3px 0 0;color:#333"><span class="t tr">2</span></div>
<svg class="abs" style="left:820px;top:80px" width="84" height="84" viewBox="0 0 84 84"><defs><filter id="sh" x="-20%" y="-20%" width="150%" height="150%"><feGaussianBlur stdDeviation="1.6"/></filter></defs><circle cx="43.6" cy="44.6" r="28" fill="none" stroke="#000" stroke-opacity="0.5" stroke-width="3.6" filter="url(#sh)"/><circle cx="40.9" cy="41.8" r="28" fill="none" stroke="#f00" stroke-width="3.9"/></svg>

<style>
#dlg{left:441px;top:322px;width:623px;height:477px;background:#f0f0f0;border:1px solid #0f3a69;box-shadow:1px 1px 5px rgba(0,0,0,.3);color:#1e1e1e}
#dlg .tb{position:absolute;left:0;top:0;width:621px;height:29px;background:#004072}
#dlg .tb .tt{position:absolute;left:33px;top:11.5px;color:#fff;font-size:12px;line-height:14px;letter-spacing:-0.1px;white-space:nowrap}
.gb{position:absolute;border:1px solid #d3dde5;border-radius:3px}
.gb .lg{position:absolute;left:6px;top:-6px;height:12px;line-height:12px;background:#f0f0f0;padding:0 2px;white-space:nowrap;overflow:visible}
.btn{position:absolute;top:439px;width:90px;height:26px;background:#fdfdfd;text-align:center;padding-top:6px}
</style>
<div id="dlg" class="abs">
 <div class="tb"><svg class="abs" style="left:9px;top:9px" width="16" height="16" viewBox="0 0 16 16"><defs><linearGradient id="lg1" x1="0" y1="0" x2="1" y2="1"><stop offset="0" stop-color="#ffffff"/><stop offset="1" stop-color="#bfd5e6"/></linearGradient></defs><rect x="0.5" y="0.5" width="15" height="15" rx="1" fill="url(#lg1)"/><path d="M10.6 2.9 H7 C5.8 5.5 4.6 9.5 4.4 11.8 C4.4 12.6 5 12.9 5.8 12.9 H9" fill="none" stroke="#0c2d5e" stroke-width="1.3"/></svg><span class="tt">Artikeleigenschaften</span>
 <svg class="abs" style="left:595px;top:12px" width="10" height="10" viewBox="0 0 10 10"><path d="M1 1 L9 9 M9 1 L1 9" stroke="#fff" stroke-width="1.6"/></svg></div>
 <div class="abs" style="left:596px;top:29px;width:16px;height:391px;background:#f0f0f0;border-left:1px solid #e6e6e6;border-right:1px solid #e6e6e6"></div>
 <svg class="abs" style="left:600px;top:34px" width="9" height="5" viewBox="0 0 9 5"><path d="M0.5 4.5 H8.5 L4.5 0.3 Z" fill="#8a8a8a"/></svg>
 <svg class="abs" style="left:600px;top:409px" width="9" height="5" viewBox="0 0 9 5"><path d="M0.5 0.5 H8.5 L4.5 4.7 Z" fill="#8a8a8a"/></svg>
 <div class="abs" style="left:7px;top:420px;width:588px;height:1px;background:#d4d4d4"></div>
 <div class="gb" style="left:32px;top:54px;width:541px;height:48px"><span class="lg" style="width:89px"><span class="t tl">Montageeinheiten</span></span>
  <span class="abs" style="left:12px;top:16px"><svg width="16" height="16" viewBox="0 0 16 16"><path d="M1.3 1.3 L6.9 8.4" stroke="#000" stroke-width="1.6" stroke-linecap="round" fill="none"/><path d="M9.5 4.6 L12.5 7.9 L9.4 10 L6.8 7.9 Z" fill="#00ffff"/><path d="M6.3 8 L8.7 10.3 L13 8.3" stroke="#000" stroke-width="1.3" fill="none"/><path d="M8.9 10.4 L7.9 11.8" stroke="#000" stroke-width="1.3"/><circle cx="8" cy="13.1" r="1.5" fill="none" stroke="#000" stroke-width="1.1"/></svg></span>
  <div class="abs" style="left:34px;top:14px;width:70px;height:22px;border:1px solid #abadb3;background:#fff"><span class="abs" style="left:60px;top:3px;width:7px;height:13px;background:#3399ff;color:#fff;text-align:center;line-height:13px"><span class="t tc">2</span></span></div>
 </div>
 <div class="gb" style="left:32px;top:114px;width:541px;height:48px"><span class="lg" style="width:81px"><span class="t tl">Montagehinweis</span></span>
  <span class="abs" style="left:13px;top:16px"><svg width="14" height="16" viewBox="0 0 14 16"><path d="M1 4 V3 H3 V2 H5 V1 H11 V4 Z" fill="#808080"/><rect x="5" y="4" width="1" height="11" fill="#800000"/><rect x="6" y="4" width="2" height="11" fill="#808000"/></svg></span>
  <div class="abs" style="left:34px;top:14px;width:425px;height:21px;border:1px solid #c6c6c6;background:#fdfdfd;padding:4px 0 0 3px;white-space:nowrap"><span class="t tl">Spezielle Einbauhinweise beachten!</span><svg class="abs" style="left:410.5px;top:8px" width="6" height="4" viewBox="0 0 6 4"><path d="M0 0.3 H6 L3 3.6 Z" fill="#6a6a6a"/></svg></div>
 </div>
 <div class="btn" style="left:411px;border:1px solid #0f3a69;box-shadow:inset 0 0 0 1px rgba(15,58,105,.35)"><span class="t tc"><u>O</u>K</span></div>
 <div class="btn" style="left:507px;border:1px solid #adadad"><span class="t tc"><u>A</u>bbrechen</span></div>
 <svg class="abs" style="left:604px;top:458px" width="8" height="8" viewBox="0 0 8 8"><g fill="#b0b0b0"><rect x="6" y="0" width="1" height="1"/><rect x="4" y="2" width="1" height="1"/><rect x="6" y="2" width="1" height="1"/><rect x="2" y="4" width="1" height="1"/><rect x="4" y="4" width="1" height="1"/><rect x="6" y="4" width="1" height="1"/><rect x="0" y="6" width="1" height="1"/><rect x="2" y="6" width="1" height="1"/><rect x="4" y="6" width="1" height="1"/><rect x="6" y="6" width="1" height="1"/></g></svg>
</div>
<svg class="abs" style="left:918px;top:496.5px" width="14" height="22" viewBox="0 0 14 22"><path d="M1 1 V17 L4.8 13.4 L7.6 20 L10 19 L7.2 12.6 H12.4 Z" fill="#fff" stroke="#1a1a2a" stroke-width="1"/></svg>
</body></html>
